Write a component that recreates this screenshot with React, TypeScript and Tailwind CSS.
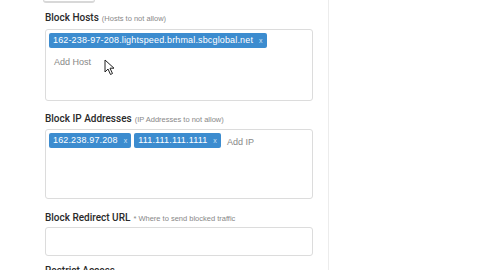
import React from "react";

const Chip = ({ text }: { text: string }) => (
  <span className="inline-flex items-center h-[15px] bg-[#3c8ccf] text-white text-[9px] leading-[15px] tracking-[0.15px] px-[4px] rounded-[2px] whitespace-nowrap shrink-0">
    <span>{text}</span>
    <span className="ml-[6px] text-[7px] text-[#cfe3f5]">x</span>
  </span>
);

const Label = ({ main, sub, mt }: { main: string; sub?: string; mt: string }) => (
  <div className={`${mt} h-[14px] leading-[14px] text-[10px] text-[#2a2a2a] whitespace-nowrap`}>
    <span className="font-medium" style={{ fontFamily: "Roboto, sans-serif" }}>{main}</span>
    {sub && <span className="ml-[3px] text-[7.5px] text-[#888]">{sub}</span>}
  </div>
);

export default function App() {
  return (
    <div
      className="w-[480px] h-[270px] bg-white overflow-hidden flex"
      style={{ fontFamily: '"Liberation Sans", Arial, sans-serif' }}
    >
      <div className="w-[329px] shrink-0 border-r border-[#ececec] pl-[45px] pr-[15px] relative">
        <div className="ml-[-2px] w-[52px] h-[3px] border-b-2 border-x border-[#d8d8d8] rounded-b-[3px]" />
        <Label mt="mt-[8px]" main="Block Hosts" sub="(Hosts to not allow)" />
        <div className="mt-[4px] h-[72px] border border-[#dcdcdc] rounded-[3px] px-[3px] pt-[3px] flex flex-col items-start">
          <Chip text="162-238-97-208.lightspeed.brhmal.sbcglobal.net" />
          <div className="mt-[8px] ml-[5px] text-[9px] text-[#888] leading-[12px]">Add Host</div>
        </div>
        <Label mt="mt-[11px]" main="Block IP Addresses" sub="(IP Addresses to not allow)" />
        <div className="mt-[3px] h-[70px] border border-[#dcdcdc] rounded-[3px] px-[3px] pt-[3px] flex items-start gap-[3px]">
          <Chip text="162.238.97.208" />
          <Chip text="111.111.111.1111" />
          <span className="ml-[3px] mt-[3px] text-[9px] text-[#888] leading-[12px]">Add IP</span>
        </div>
        <Label mt="mt-[12px]" main="Block Redirect URL" sub="* Where to send blocked traffic" />
        <div className="mt-[2px] h-[29px] border border-[#dcdcdc] rounded-[3px]" />
        <Label mt="mt-[8px]" main="Restrict Access" />
        <svg className="absolute left-[104px] top-[59px]" width="12" height="17" viewBox="0 0 12 17">
          <path d="M1 1 L1 13 L4 10 L6.5 15.5 L8.5 14.5 L6 9.2 L10 9.2 Z" fill="#fff" stroke="#222" strokeWidth="1" strokeLinejoin="round" />
        </svg>
      </div>
      <div className="flex-1" />
    </div>
  );
}
